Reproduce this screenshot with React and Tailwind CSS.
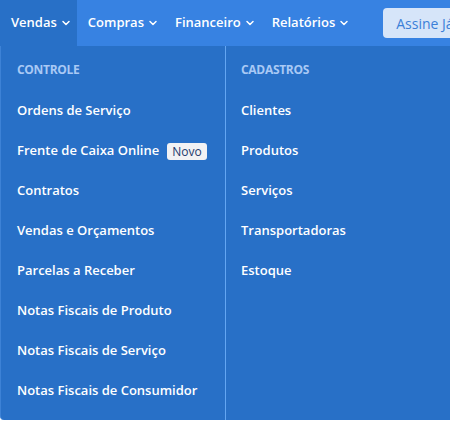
import { ChevronDown } from 'lucide-react';

const navItems = ['Vendas', 'Compras', 'Financeiro', 'Relatórios'];

const controle = [
  'Ordens de Serviço',
  'Frente de Caixa Online',
  'Contratos',
  'Vendas e Orçamentos',
  'Parcelas a Receber',
  'Notas Fiscais de Produto',
  'Notas Fiscais de Serviço',
  'Notas Fiscais de Consumidor',
];

const cadastros = ['Clientes', 'Produtos', 'Serviços', 'Transportadoras', 'Estoque'];

const MenuLink = ({ label }) => (
  <div className="h-[40px] flex items-center text-white text-[13px] font-semibold whitespace-nowrap">
    {label}
    {label === 'Frente de Caixa Online' && (
      <span className="ml-[8px] px-[5px] h-[17px] leading-[17px] rounded-[3px] bg-[#f2f2f4] text-[#1d3a6b] text-[12px] font-medium">
        Novo
      </span>
    )}
  </div>
);

export default function App() {
  return (
    <div className="w-[450px] h-[421px] overflow-hidden bg-white" style={{ fontFamily: '"Open Sans", "Noto Sans", sans-serif' }}>
      <nav className="h-[46px] flex items-center bg-[#3782e2] whitespace-nowrap">
        {navItems.map((item, i) => (
          <div
            key={item}
            className={`h-full flex items-center gap-[3px] pl-[11px] pr-[5px] text-white text-[13px] font-semibold ${i === 0 ? 'bg-[#2870c7]' : ''}`}
          >
            {item}
            <ChevronDown size={12} strokeWidth={3} />
          </div>
        ))}
        <div className="ml-[28px] h-[30px] pl-[13px] pr-[12px] flex items-center rounded-[4px] bg-[#d6e5f9] text-[#3b7fd8] text-[14px] font-medium">
          Assine Já
        </div>
      </nav>
      <div className="flex h-[374px] bg-[#2870c7] rounded-bl-[4px] border-l border-[#3d82d6]">
        <div className="w-[225px] pl-[16px] pt-[10px] border-r border-[#64a6f2]">
          <div className="h-[27px] flex items-center text-[12px] font-bold text-[#a9c9f5] tracking-tight">CONTROLE</div>
          <div className="pt-[8px]">
            {controle.map((c) => (
              <MenuLink key={c} label={c} />
            ))}
          </div>
        </div>
        <div className="flex-1 pl-[15px] pt-[10px]">
          <div className="h-[27px] flex items-center text-[12px] font-bold text-[#a9c9f5] tracking-tight">CADASTROS</div>
          <div className="pt-[8px]">
            {cadastros.map((c) => (
              <MenuLink key={c} label={c} />
            ))}
          </div>
        </div>
      </div>
    </div>
  );
}
